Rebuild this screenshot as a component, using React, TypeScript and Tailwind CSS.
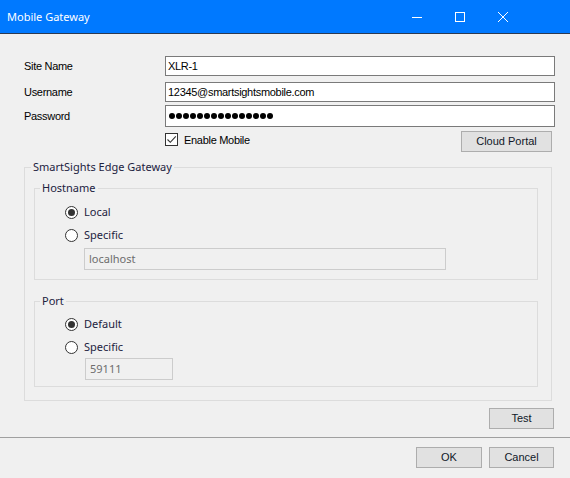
import React from "react";

const sans = "font-['Liberation_Sans',Arial,sans-serif]";
const ui = "font-['Noto_Sans',sans-serif]";

function TitleBar() {
  return (
    <div className="flex h-[34px] shrink-0 items-center border-b border-[#2c3a52] bg-[#0079ff] text-white">
      <span className={`${ui} pl-[7px] text-[11px] leading-none`}>Mobile Gateway</span>
      <div className="ml-auto mr-[46px] flex h-full">
        {/* minimize */}
        <div className="flex w-[43px] items-center justify-center">
          <svg width="10" height="10" viewBox="0 0 10 10">
            <path d="M0 5.5h10" stroke="white" strokeWidth="1" />
          </svg>
        </div>
        {/* maximize */}
        <div className="flex w-[43px] items-center justify-center">
          <svg width="10" height="10" viewBox="0 0 10 10">
            <rect x="0.5" y="0.5" width="9" height="9" fill="none" stroke="white" strokeWidth="1" />
          </svg>
        </div>
        {/* close */}
        <div className="flex w-[43px] items-center justify-center">
          <svg width="10" height="10" viewBox="0 0 10 10">
            <path d="M0 0L10 10M10 0L0 10" stroke="white" strokeWidth="1" />
          </svg>
        </div>
      </div>
    </div>
  );
}

function FieldRow({ label, h, className, children }: { label: string; h: string; className?: string; children: React.ReactNode }) {
  return (
    <div className={`flex items-center ${className ?? ""}`}>
      <span className={`${sans} w-[141px] text-[11px] tracking-[-0.3px] text-black`}>{label}</span>
      <div className={`flex flex-1 items-center border border-[#7a7a7a] bg-white pl-[2px] ${h}`}>{children}</div>
    </div>
  );
}

function Radio({ label, checked, className }: { label: string; checked?: boolean; className?: string }) {
  return (
    <div className={`flex items-center pl-[30px] ${className ?? ""}`}>
      <span className="flex h-[13px] w-[13px] items-center justify-center rounded-full border border-[#333] bg-white">
        {checked && <span className="h-[7px] w-[7px] rounded-full bg-[#333]" />}
      </span>
      <span className={`${ui} ml-[6px] text-[11px] text-[#1c2240]`}>{label}</span>
    </div>
  );
}

function Button({ children, className }: { children: React.ReactNode; className?: string }) {
  return (
    <div
      className={`${sans} flex h-[21px] items-center justify-center border border-[#adadad] bg-[#e1e1e1] text-[11px] text-[#101828] ${className ?? ""}`}
    >
      {children}
    </div>
  );
}

function Disabled({ value, className }: { value: string; className?: string }) {
  return (
    <div className={`${ui} flex h-[22px] items-center border border-[#cccccc] bg-[#f0f0f0] pl-[4px] text-[11px] text-[#6d6d6d] ${className ?? ""}`}>
      {value}
    </div>
  );
}

export default function App() {
  return (
    <div className="flex h-[478px] w-[570px] flex-col overflow-hidden bg-[#f0f0f0]">
      <TitleBar />

      {/* account fields */}
      <div className="flex flex-col pl-[24px] pr-[15px] pt-[22px]">
        <FieldRow label="Site Name" h="h-[20px]">
          <span className={`${sans} text-[11px] tracking-[-0.3px] text-black`}>XLR-1</span>
        </FieldRow>
        <FieldRow label="Username" h="h-[20px]" className="mt-[6px]">
          <span className={`${sans} text-[11px] tracking-[-0.3px] text-black`}>12345@smartsightsmobile.com</span>
        </FieldRow>
        <FieldRow label="Password" h="h-[22px]" className="mt-[3px]">
          <div className="flex gap-[1px] pl-[1px]">
            {Array.from({ length: 15 }).map((_, i) => (
              <span key={i} className="h-[6px] w-[6px] rounded-full bg-black" />
            ))}
          </div>
        </FieldRow>
        <div className="mt-[4px] flex h-[21px] items-start pl-[141px]">
          <span className="mt-[2px] flex h-[13px] w-[13px] items-center justify-center border border-[#333] bg-white">
            <svg width="11" height="11" viewBox="0 0 11 11">
              <path d="M1.5 5.5l2.8 2.8 5.5-6" fill="none" stroke="#333" strokeWidth="1.1" />
            </svg>
          </span>
          <span className={`${sans} ml-[6px] mt-[3px] text-[11px] leading-[13px] tracking-[-0.3px] text-black`}>Enable Mobile</span>
          <Button className="ml-auto mr-[3px] w-[91px]">Cloud Portal</Button>
        </div>
      </div>

      {/* gateway settings */}
      <fieldset className="ml-[24px] mt-[7px] w-[528px] border border-[#dcdcdc]">
        <legend className={`${ui} ml-[6px] px-[2px] text-[11px] leading-[16px] text-[#1c2240]`}>SmartSights Edge Gateway</legend>
        <div className="flex flex-col pb-[13px] pl-[9px] pt-[5px]">
          <fieldset className="w-[504px] border border-[#dcdcdc]">
            <legend className={`${ui} ml-[5px] px-[2px] text-[11px] leading-[16px] text-[#1c2240]`}>Hostname</legend>
            <div className="flex flex-col pb-[9px] pt-[5px]">
              <Radio label="Local" checked className="h-[23px]" />
              <Radio label="Specific" className="h-[23px]" />
              <Disabled value="localhost" className="ml-[49px] mt-[1px] w-[362px]" />
            </div>
          </fieldset>

          <fieldset className="mt-[13px] w-[504px] border border-[#dcdcdc]">
            <legend className={`${ui} ml-[5px] px-[2px] text-[11px] leading-[16px] text-[#1c2240]`}>Port</legend>
            <div className="flex flex-col pb-[6px] pt-[3px]">
              <Radio label="Default" checked className="h-[24px]" />
              <Radio label="Specific" className="h-[22px]" />
              <Disabled value="59111" className="ml-[50px] w-[88px]" />
            </div>
          </fieldset>
        </div>
      </fieldset>

      <div className="mt-[7px] flex justify-end pr-[16px]">
        <Button className="w-[65px]">Test</Button>
      </div>

      {/* dialog buttons */}
      <div className="mt-[8px] flex justify-end gap-[7px] border-t border-[#a0a0a0] pr-[16px] pt-[9px]">
        <Button className="w-[66px]">OK</Button>
        <Button className="w-[65px]">Cancel</Button>
      </div>
    </div>
  );
}
